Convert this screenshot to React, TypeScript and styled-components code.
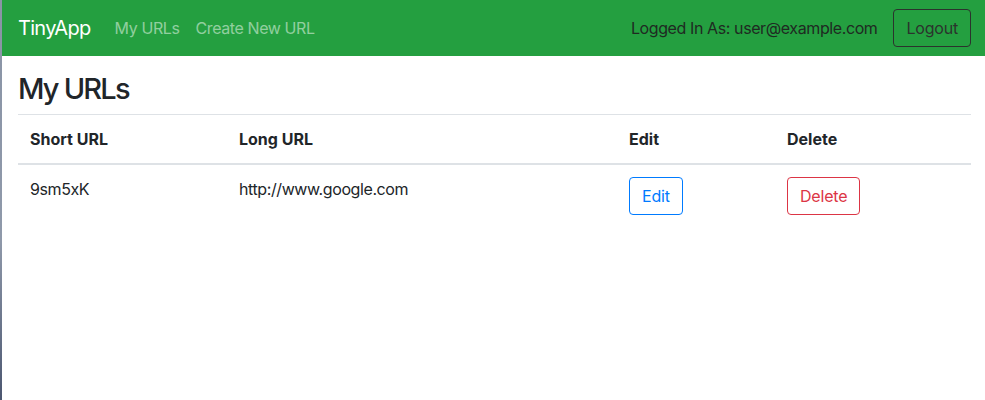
import React from "react";
import styled, { createGlobalStyle } from "styled-components";

const Global = createGlobalStyle`
  html, body { margin: 0; padding: 0; background: #fff; }
  body {
    font-family: Inter, "Noto Sans", "Liberation Sans", sans-serif;
    font-size: 16px;
    line-height: 1.5;
    letter-spacing: -0.4px;
    color: #212529;
  }
  * { box-sizing: border-box; }
`;

const Shell = styled.div`
  display: flex;
  min-height: 400px;
`;

const Edge = styled.div`
  width: 2px;
  flex: 0 0 2px;
  background: linear-gradient(#8a94a6 0%, #8f99aa 60%, #4b5670 100%);
`;

const Page = styled.div`
  flex: 1;
  min-width: 0;
`;

const NavBar = styled.nav`
  display: flex;
  align-items: center;
  height: 56px;
  padding: 8px 14px 8px 16px;
  background: #249f40;
`;

const Brand = styled.a`
  font-size: 20px;
  line-height: 30px;
  letter-spacing: -0.7px;
  color: #fff;
  margin-right: 16px;
  text-decoration: none;
`;

const NavLinks = styled.div`
  display: flex;
  flex: 1;
`;

const NavLink = styled.a`
  color: rgba(255, 255, 255, 0.5);
  padding: 8px;
  text-decoration: none;
`;

const NavText = styled.span`
  color: #1f2a22;
  margin-right: 16px;
`;

const Button = styled.button<{ $tone: string }>`
  font-family: inherit;
  font-size: 16px;
  line-height: 24px;
  letter-spacing: -0.2px;
  padding: 6px 12px;
  border-radius: 4px;
  background: transparent;
  border: 1px solid ${(p) => p.$tone};
  color: ${(p) => p.$tone};
  cursor: pointer;
`;

const Main = styled.main`
  padding: 14px 14px 0 16px;
`;

const Title = styled.h2`
  margin: 0 0 6px;
  font-size: 29px;
  font-weight: 500;
  line-height: 38px;
  letter-spacing: -1.8px;
  color: #212529;
`;

const Table = styled.table`
  width: 100%;
  border-collapse: collapse;
`;

const Th = styled.th<{ $w: number }>`
  width: ${(p) => p.$w}px;
  text-align: left;
  font-weight: 700;
  letter-spacing: 0;
  padding: 12px;
  border-top: 1px solid #dee2e6;
  border-bottom: 2px solid #dee2e6;
  vertical-align: bottom;
`;

const Td = styled.td`
  padding: 12px;
  vertical-align: top;
`;

export default function App() {
  return (
    <>
      <Global />
      <Shell>
        <Edge />
        <Page>
          <NavBar>
            <Brand href="#">TinyApp</Brand>
            <NavLinks>
              <NavLink href="#">My URLs</NavLink>
              <NavLink href="#">Create New URL</NavLink>
            </NavLinks>
            <NavText>Logged In As: user@example.com</NavText>
            <Button $tone="#2b332d">Logout</Button>
          </NavBar>
          <Main>
            <Title>My URLs</Title>
            <Table>
              <thead>
                <tr>
                  <Th $w={209}>Short URL</Th>
                  <Th $w={390}>Long URL</Th>
                  <Th $w={158}>Edit</Th>
                  <Th $w={196}>Delete</Th>
                </tr>
              </thead>
              <tbody>
                <tr>
                  <Td>9sm5xK</Td>
                  <Td>http://www.google.com</Td>
                  <Td>
                    <Button $tone="#007bff">Edit</Button>
                  </Td>
                  <Td>
                    <Button $tone="#dc3545">Delete</Button>
                  </Td>
                </tr>
              </tbody>
            </Table>
          </Main>
        </Page>
      </Shell>
    </>
  );
}
